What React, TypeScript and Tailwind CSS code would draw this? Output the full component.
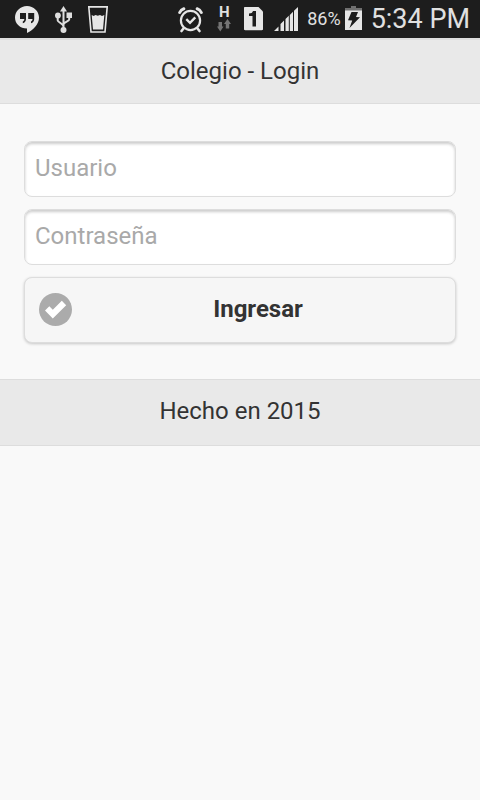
import type { FormEvent } from 'react';

function HangoutsIcon() {
  return (
    <svg width="24" height="28" viewBox="0 0 24 28" aria-hidden="true">
      <path
        fill="#e6e6e6"
        d="M12 0C5.400 0 0 5.200 0 11.500S5 22.500 12 22.500V27c6.500-3.200 12-8.800 12-15.500C24 5.200 18.600 0 12 0z"
      />
      <path
        fill="#1d1d1d"
        d="M5 7h6v6c0 2.200-1.200 3.700-3.200 4.200V15.500c1-.4 1.500-1.200 1.500-2.500H5zM13.200 7h6v6c0 2.200-1.200 3.700-3.200 4.200V15.500c1-.4 1.500-1.200 1.500-2.500h-4.300z"
      />
    </svg>
  );
}

function UsbIcon() {
  return (
    <svg width="17" height="28" viewBox="0 0 17 28" aria-hidden="true" fill="none" stroke="#dedede" strokeWidth="2">
      <path d="M8.500 4v20M2.700 10v4.500c0 1.500 5.800 3.500 5.800 6M14.200 9v4.500c0 1.500-5.700 3-5.700 5" />
      <path d="M8.500 0l3.500 5.500H5z" fill="#dedede" stroke="none" />
      <circle cx="2.900" cy="9.500" r="2.900" fill="#dedede" stroke="none" />
      <path d="M11.500 6.500H17V12h-5.500z" fill="#dedede" stroke="none" />
      <circle cx="8.500" cy="24" r="3" fill="#dedede" stroke="none" />
    </svg>
  );
}

function GlassIcon() {
  return (
    <svg width="20" height="28" viewBox="0 0 20 28" aria-hidden="true">
      <path d="M.8.900h18.400L17 26H3z" fill="none" stroke="#e6e6e6" strokeWidth="1.600" />
      <path d="M3.700 9l2 1 1.800-1 2.300.7L12 9l2 .9 2.300-.9L15 23.500H5z" fill="#e6e6e6" />
    </svg>
  );
}

function AlarmIcon() {
  return (
    <svg width="25" height="28" viewBox="0 -2 25 28" aria-hidden="true" fill="none" stroke="#e6e6e6" strokeLinecap="round">
      <circle cx="12.500" cy="13.500" r="9.600" strokeWidth="2.200" />
      <path d="M8.300 12.200l3.700 3.600 5.300-5.400" strokeWidth="2.400" strokeLinecap="butt" />
      <path d="M1.700 5.500C2.500 3.700 3.800 2.300 5.800 1.700M23.300 5.500c-.8-1.800-2.100-3.200-4.100-3.800" strokeWidth="3" />
      <path d="M5.500 21.500l-2 2.500M19.500 21.500l2 2.500" strokeWidth="2.600" />
    </svg>
  );
}

function DataArrowsIcon() {
  return (
    <svg width="14" height="13" viewBox="0 0 14 13" aria-hidden="true" fill="#747474">
      <path d="M1.500 3h3.500v4.500h1.500L3.300 12.500 0 7.500h1.500z" />
      <path d="M8.800 9.500h3.400V5H14L10.500 0 7 5h1.800z" />
    </svg>
  );
}

function SimIcon() {
  return (
    <svg width="19" height="24" viewBox="0 0 19 24" aria-hidden="true">
      <path d="M1 0h13.500L19 4.500V22c0 .8-.4 1.200-1.200 1.200H1.200C.4 23.200 0 22.800 0 22V1c0-.6.4-1 1-1z" fill="#e6e6e6" />
      <path d="M5 6.500c2.300 0 3.500-.8 4-2.500h3v15.500H8.500V9H5z" fill="#1d1d1d" />
    </svg>
  );
}

function SignalIcon() {
  return (
    <svg width="24" height="24" viewBox="0 0 24 24" aria-hidden="true" fill="#e6e6e6">
      <path d="M0 24l4.500-4.500V24zM6.500 24v-7l3.500-3.500V24zM11.500 24V12l3.300-3.300V24zM15.800 24V8l3.200-3.200V24zM20 24V3.800L24 0v24z" />
    </svg>
  );
}

function BatteryIcon() {
  return (
    <svg width="17" height="26" viewBox="0 0 17 26" aria-hidden="true">
      <path d="M6 0h5v2h6v3H0V2h6z" fill="#707070" />
      <path d="M0 4.500h17V24H0z" fill="#e6e6e6" />
      <path d="M6.500 6H13l-2 5 4 .3L4.500 22l2.700-7.500-4.200-.3z" fill="#1d1d1d" />
    </svg>
  );
}

function CheckBadge() {
  return (
    <svg width="33" height="33" viewBox="0 0 33 33" aria-hidden="true">
      <circle cx="16.500" cy="16.500" r="16.500" fill="#ababab" />
      <path d="M6 17.500l4.300-4.200 3.500 3.500 9-9 4.400 4.400-13.400 13.300z" fill="#fff" />
    </svg>
  );
}

function StatusBar() {
  return (
    <div className="flex h-[38px] items-center justify-between bg-[#1d1d1d] pr-[10px] pl-[15px] text-[#e0e0e0]">
      <div className="flex items-center gap-4 pt-0.5">
        <HangoutsIcon />
        <UsbIcon />
        <GlassIcon />
      </div>
      <div className="flex items-center">
        <AlarmIcon />
        <div className="ml-[14px] flex w-[14px] flex-col items-center">
          <span className="text-[15px] leading-[13px] font-bold">H</span>
          <DataArrowsIcon />
        </div>
        <div className="ml-[13px] flex items-center gap-[11px]">
          <SimIcon />
          <SignalIcon />
        </div>
        <span className="ml-[9px] text-lg leading-6">86%</span>
        <div className="ml-1 flex items-center gap-[9px]">
          <BatteryIcon />
          <span className="text-[27px] leading-8">5:34 PM</span>
        </div>
      </div>
    </div>
  );
}

const fieldClass =
  'block h-14 w-full rounded-lg border border-[#dddddd] bg-white px-[10px] pb-0.5 text-2xl text-[#333333] shadow-[inset_0_2px_3px_rgba(0,0,0,0.2)] outline-none placeholder:text-[#a9a9a9] placeholder:opacity-100';

export default function App() {
  const handleSubmit = (event: FormEvent) => event.preventDefault();

  return (
    <div className="min-h-screen bg-[#f9f9f9] font-[Roboto,sans-serif] text-[#333333]">
      <StatusBar />
      <header className="flex h-[66px] items-center justify-center border-t-2 border-b border-[#dddddd] bg-[#e9e9e9] pb-0.5">
        <h1 className="text-2xl [text-shadow:0_1px_0_#eeeeee]">Colegio - Login</h1>
      </header>
      <main className="px-6 pt-[37px] pb-9">
        <form className="flex flex-col gap-3" onSubmit={handleSubmit}>
          <input type="text" aria-label="Usuario" placeholder="Usuario" className={fieldClass} />
          <input type="password" aria-label="Contraseña" placeholder="Contraseña" className={fieldClass} />
          <button
            type="submit"
            className="relative flex h-[66px] w-full items-center justify-center rounded-lg border border-[#dddddd] bg-[#f6f6f6] pr-4 pb-0.5 pl-[52px] text-2xl font-bold shadow-[0_1px_3px_rgba(0,0,0,0.2)]"
          >
            <span className="absolute top-[15px] left-[14px]">
              <CheckBadge />
            </span>
            Ingresar
          </button>
        </form>
      </main>
      <footer className="flex h-[67px] items-center justify-center border-t border-b border-[#dddddd] bg-[#e9e9e9] pb-1">
        <p className="text-2xl [text-shadow:0_1px_0_#eeeeee]">Hecho en 2015</p>
      </footer>
    </div>
  );
}
